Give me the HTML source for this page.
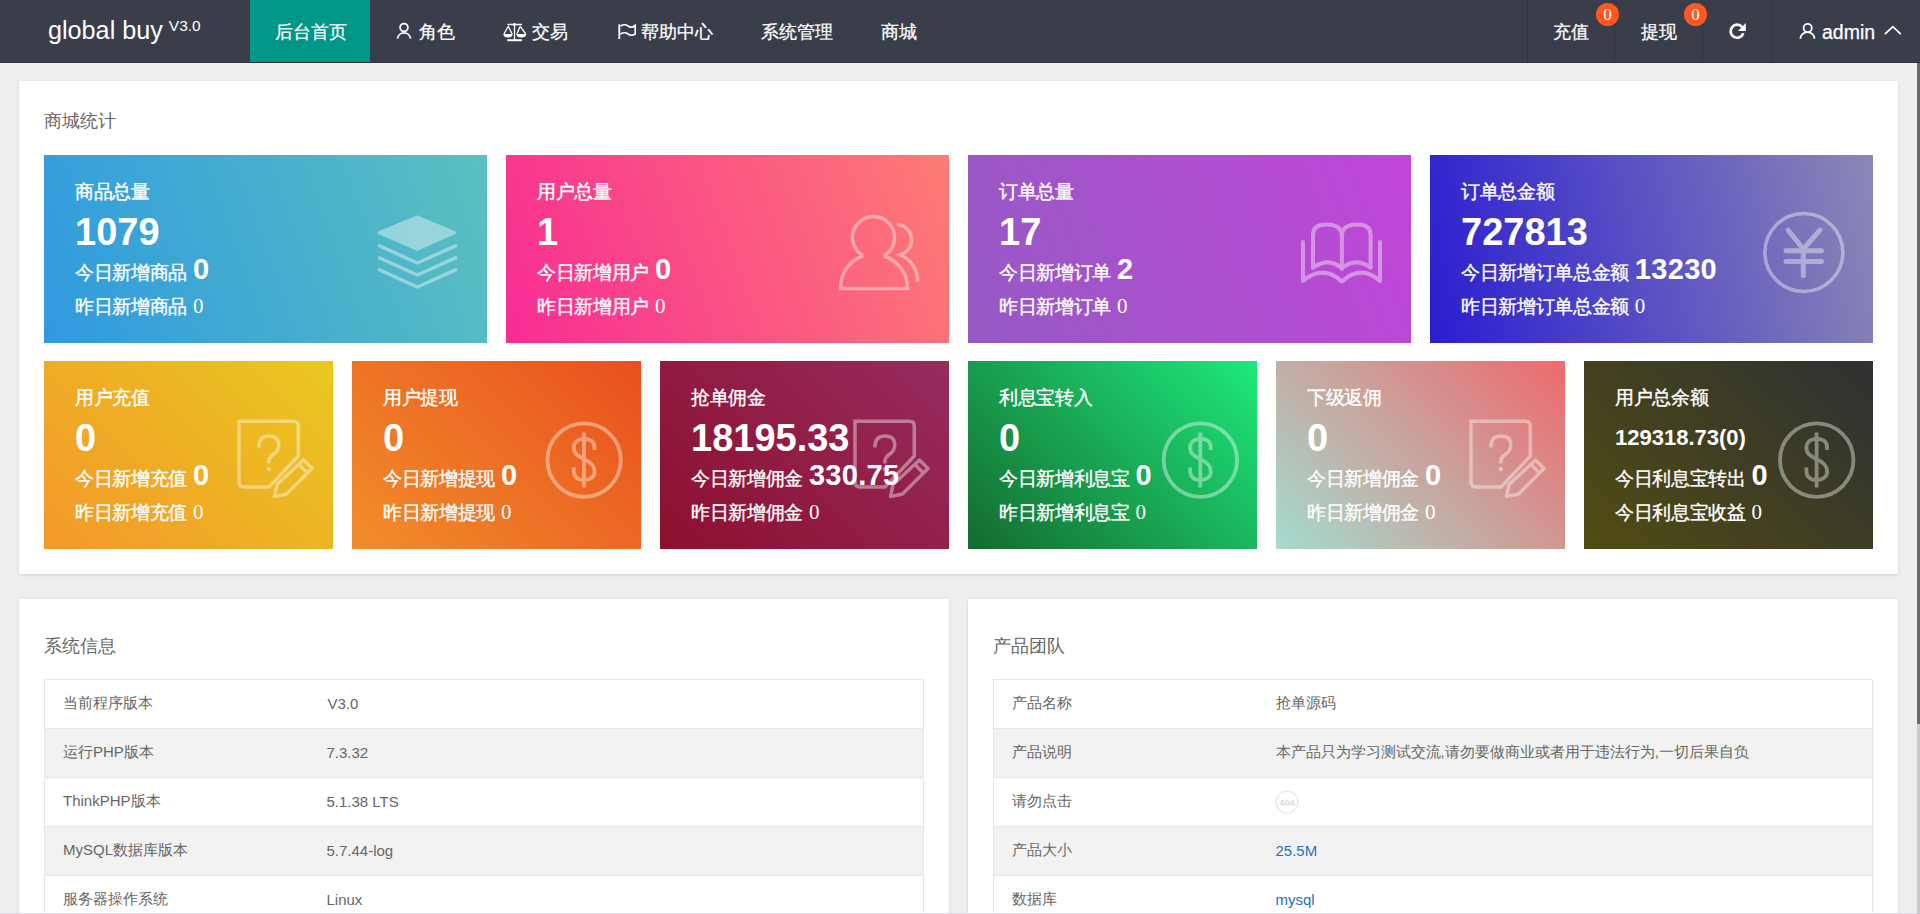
<!DOCTYPE html>
<html><head><meta charset="utf-8">
<style>
*{margin:0;padding:0;box-sizing:border-box}
html,body{width:1920px;height:914px;overflow:hidden;background:#eeeeee;font-family:"Liberation Sans",sans-serif}
.abs{position:absolute}
#hdr{position:absolute;left:0;top:0;width:1920px;height:63px;background:#3a3e4a;border-bottom:1px solid #2f323c}
.logo{position:absolute;left:48px;top:16px;color:#fff;font-size:25.2px;white-space:nowrap}
.logo sup{font-size:15.5px;position:relative;top:1px;vertical-align:top;margin-left:6px}
.nav{position:absolute;top:1px;height:62px;line-height:62px;color:#fff;font-size:18px;white-space:nowrap;-webkit-text-stroke:0.25px #fff}
.nav svg{position:absolute}
.sep{position:absolute;top:0;width:1px;height:62px;background:#31343d}
.badge{position:absolute;top:3px;width:23px;height:23px;border-radius:50%;background:#FF5722;color:#fff;font-family:"Liberation Serif",serif;font-size:17px;line-height:23px;text-align:center}
.card{position:absolute;background:#fff;box-shadow:0 1px 3px rgba(0,0,0,.12)}
.ctitle{position:absolute;color:#666;font-size:18px;white-space:nowrap}
.st{position:absolute;color:#fff;overflow:hidden;white-space:nowrap;-webkit-text-stroke:0.35px #fff}
.st .n{-webkit-text-stroke:0}
.st .t{position:absolute;left:31px;top:27px;font-size:19px;line-height:20px;letter-spacing:-0.35px}
.st .n{position:absolute;left:31px;top:57px;font-size:38px;line-height:40px;font-weight:bold}
.st .d1{position:absolute;left:31px;top:104px;font-size:19px;line-height:20px;letter-spacing:-0.35px}
.st .d1 b{font-size:29px;margin-left:6px;-webkit-text-stroke:0;letter-spacing:0.3px}
.st .d2{position:absolute;left:31px;top:141px;font-size:19px;line-height:20px;letter-spacing:-0.35px}
.st .d2 i{font-style:normal;font-family:"Liberation Serif",serif;font-size:21px;margin-left:6px;-webkit-text-stroke:0;letter-spacing:0}
.st svg{position:absolute}
table{position:absolute;border-left:1px solid #e6e6e6;border-right:1px solid #e6e6e6;border-collapse:collapse;table-layout:fixed;font-size:15px;color:#666}
td{border-top:1px solid #e6e6e6;border-bottom:1px solid #e6e6e6;height:49px;padding:0 18px 2px 18px;white-space:nowrap}
td.v{padding-left:19px}
tr.g td{background:#f2f2f2}
td a{color:#1E70BF;text-decoration:none}
#sb{position:absolute;left:1917px;top:63px;width:3px;height:851px;background:#c9c9c9}
#sbt{position:absolute;left:1917px;top:63px;width:3px;height:661px;background:#6b6b6b}
</style></head><body>

<div id="hdr">
  <div class="logo">global buy<sup>V3.0</sup></div>
  <div class="abs" style="left:250px;top:0;width:120px;height:62px;background:#009688"></div>
  <div class="nav" style="left:275px">后台首页</div>
  <div class="nav" style="left:419px">角色</div>
  <div class="nav" style="left:532px">交易</div>
  <div class="nav" style="left:641px">帮助中心</div>
  <div class="nav" style="left:761px">系统管理</div>
  <div class="nav" style="left:881px">商城</div>

  <div class="sep" style="left:1527px"></div>
  <div class="sep" style="left:1614px"></div>
  <div class="sep" style="left:1702px"></div>
  <div class="sep" style="left:1772px"></div>
  <div class="nav" style="left:1553px">充值</div>
  <div class="badge" style="left:1596px">0</div>
  <div class="nav" style="left:1641px">提现</div>
  <div class="badge" style="left:1684px">0</div>
  <div class="nav" style="left:1822px;font-size:19.5px">admin</div>
</div>






<div class="card" style="left:19px;top:81px;width:1879px;height:493px"></div>
<div class="ctitle" style="left:44px;top:109px">商城统计</div>

<!-- row 1 -->
<div class="st" style="left:44px;top:155px;width:443px;height:188px;background:linear-gradient(70deg,#2f9ae0,#5bc0bf)">
  <div class="t">商品总量</div><div class="n">1079</div>
  <div class="d1">今日新增商品<b>0</b></div><div class="d2">昨日新增商品<i>0</i></div>
</div>
<div class="st" style="left:506px;top:155px;width:443px;height:188px;background:linear-gradient(70deg,#f72c93,#fd7c74)">
  <div class="t">用户总量</div><div class="n">1</div>
  <div class="d1">今日新增用户<b>0</b></div><div class="d2">昨日新增用户<i>0</i></div>
</div>
<div class="st" style="left:968px;top:155px;width:443px;height:188px;background:linear-gradient(70deg,#955ac4,#c146d8)">
  <div class="t">订单总量</div><div class="n">17</div>
  <div class="d1">今日新增订单<b>2</b></div><div class="d2">昨日新增订单<i>0</i></div>
</div>
<div class="st" style="left:1430px;top:155px;width:443px;height:188px;background:linear-gradient(78deg,#2a1dd0,#8c88b5)">
  <div class="t">订单总金额</div><div class="n">727813</div>
  <div class="d1">今日新增订单总金额<b>13230</b></div><div class="d2">昨日新增订单总金额<i>0</i></div>
</div>

<!-- row 2 -->
<div class="st" style="left:44px;top:361px;width:289px;height:188px;background:linear-gradient(45deg,#f3982a,#e9c81f)">
  <div class="t">用户充值</div><div class="n">0</div>
  <div class="d1">今日新增充值<b>0</b></div><div class="d2">昨日新增充值<i>0</i></div>
</div>
<div class="st" style="left:352px;top:361px;width:289px;height:188px;background:linear-gradient(45deg,#f28d2a,#e8501f)">
  <div class="t">用户提现</div><div class="n">0</div>
  <div class="d1">今日新增提现<b>0</b></div><div class="d2">昨日新增提现<i>0</i></div>
</div>
<div class="st" style="left:660px;top:361px;width:289px;height:188px;background:linear-gradient(45deg,#8c0f2e,#962c5e)">
  <div class="t">抢单佣金</div><div class="n">18195.33</div>
  <div class="d1">今日新增佣金<b>330.75</b></div><div class="d2">昨日新增佣金<i>0</i></div>
</div>
<div class="st" style="left:968px;top:361px;width:289px;height:188px;background:linear-gradient(45deg,#146a2f,#1ee97b)">
  <div class="t">利息宝转入</div><div class="n">0</div>
  <div class="d1">今日新增利息宝<b>0</b></div><div class="d2">昨日新增利息宝<i>0</i></div>
</div>
<div class="st" style="left:1276px;top:361px;width:289px;height:188px;background:linear-gradient(45deg,#a4dcce,#ee6a6c)">
  <div class="t">下级返佣</div><div class="n">0</div>
  <div class="d1">今日新增佣金<b>0</b></div><div class="d2">昨日新增佣金<i>0</i></div>
</div>
<div class="st" style="left:1584px;top:361px;width:289px;height:188px;background:linear-gradient(45deg,#514c12,#2e3133)">
  <div class="t">用户总余额</div><div class="n" style="font-size:22px">129318.73(0)</div>
  <div class="d1">今日利息宝转出<b>0</b></div><div class="d2">今日利息宝收益<i>0</i></div>
</div>

<!-- bottom cards -->
<div class="card" style="left:19px;top:599px;width:930px;height:400px"></div>
<div class="ctitle" style="left:44px;top:634px">系统信息</div>
<table style="left:44px;top:679px;width:880px">
<colgroup><col style="width:264px"><col></colgroup>
<tr><td>当前程序版本</td><td class="v">V3.0</td></tr>
<tr class="g"><td>运行PHP版本</td><td>7.3.32</td></tr>
<tr><td>ThinkPHP版本</td><td>5.1.38 LTS</td></tr>
<tr class="g"><td>MySQL数据库版本</td><td>5.7.44-log</td></tr>
<tr><td>服务器操作系统</td><td>Linux</td></tr>
</table>

<div class="card" style="left:968px;top:599px;width:930px;height:400px"></div>
<div class="ctitle" style="left:993px;top:634px">产品团队</div>
<table style="left:993px;top:679px;width:880px">
<colgroup><col style="width:264px"><col></colgroup>
<tr><td>产品名称</td><td>抢单源码</td></tr>
<tr class="g"><td>产品说明</td><td>本产品只为学习测试交流,请勿要做商业或者用于违法行为,一切后果自负</td></tr>
<tr><td>请勿点击</td><td></td></tr>
<tr class="g"><td>产品大小</td><td><a>25.5M</a></td></tr>
<tr><td>数据库</td><td><a>mysql</a></td></tr>
</table>

<svg id="ov" width="1920" height="914" viewBox="0 0 1920 914" style="position:absolute;left:0;top:0" fill="none" stroke="#fff">
<defs>
 <g id="survey" stroke-width="3.5" stroke-linejoin="round">
  <path d="M269 487 L244 487 Q239 487 239 482 L239 421.3 L293.5 421.3 Q298.3 421.3 298.3 426 L298.3 456 Z" stroke-linejoin="miter"/>
  <path d="M258.8 447.5 Q258.8 436 269 436 Q278.8 436 278.8 445 Q278.8 451 272.5 455 Q268.8 457.5 268.8 462 L268.8 463.5"/>
  <circle cx="268.8" cy="469" r="2.3" fill="#fff" stroke="none"/>
  <path d="M303.5 460 L312 468.5 L286.5 494 L274.5 496.5 L277 484.5 Z"/>
  <path d="M299 464.5 L307.5 473"/>
 </g>
 <g id="dollar" stroke-width="3.8">
  <circle cx="584.1" cy="460.1" r="36.7"/>
  <path d="M584 432.5 L584 487.5"/>
  <path d="M594.4 450 L594.4 447 C594.4 441.5 590 438.8 584 438.8 C577.5 438.8 573.8 442.5 573.8 448 C573.8 454 579 456.8 584 459.3 C590 461.8 594.6 465.5 594.6 471.5 C594.6 477 590 480 584 480 C577.8 480 573.8 477 573.8 471 L573.8 467.5"/>
 </g>
</defs>
<g opacity="0.4">
 <!-- layers -->
 <path d="M417.3 217 L454.5 232.7 L417.3 249.5 L379 232.7 Z" fill="#fff" stroke-width="3" stroke-linejoin="round"/>
 <path d="M379.5 245.8 L417.3 263 L455.5 245.8 M379.5 257.9 L417.3 275 L455.5 257.9 M379.5 269.9 L417.3 287 L455.5 269.9" stroke-width="3.5" stroke-linecap="round" stroke-linejoin="round"/>
 <!-- users -->
 <g stroke-width="3.4" stroke-linejoin="miter">
  <path d="M863.2 255.8 A21 21 0 1 1 883.9 255.8"/>
  <path d="M863.2 255.8 C849 261 840.5 273 840.5 288.5 L907.5 288.5 C907.5 273 898 261 883.9 255.8"/>
  <path d="M898.5 224.5 A15.5 15.5 0 0 1 900 254.8 C911 259.5 917.5 269 917.5 280.5" stroke-linecap="round"/>
 </g>
 <!-- book -->
 <g stroke-width="4" stroke-linecap="round" stroke-linejoin="round">
  <path d="M1303 242 L1303 281 Q1323 264 1341.9 281.5 Q1361 264 1380 281 L1380 242"/>
  <path d="M1313 267.5 L1313 235 Q1313 224.6 1326 224.6 Q1341.9 224.6 1341.9 236 L1341.9 269"/>
  <path d="M1370.6 267.5 L1370.6 235 Q1370.6 224.6 1357.6 224.6 Q1341.9 224.6 1341.9 236"/>
  <path d="M1313 267.5 Q1328 257 1341.9 268 Q1356 257 1370.6 267.5"/>
 </g>
 <!-- yen -->
 <circle cx="1803.85" cy="252.5" r="39" stroke-width="3.5"/>
 <path d="M1788.2 230.2 L1803.3 249 L1820 230.2 M1803.3 249 L1803.3 275.5 M1786 250.8 L1821.5 250.8 M1786 261.4 L1821.5 261.4" stroke-width="5" stroke-linecap="round" stroke-linejoin="round"/>
 <!-- row2 icons -->
 <use href="#survey"/>
 <use href="#survey" transform="translate(616 0)"/>
 <use href="#survey" transform="translate(1232 0)"/>
 <use href="#dollar"/>
 <use href="#dollar" transform="translate(616.3 0)"/>
 <use href="#dollar" transform="translate(1232.6 0)"/>
</g>
<circle cx="1287" cy="802.2" r="11" stroke="#e3e3e3" stroke-width="1.1"/>
<text x="1287" y="805.5" fill="#dcdcdc" stroke="none" font-size="9" font-weight="bold" text-anchor="middle" font-family="Liberation Sans">404</text>
<!-- header icons -->
<g stroke-width="1.8">
 <circle cx="404" cy="27.5" r="3.9"/>
 <path d="M397.5 38.7 A6.6 6.6 0 0 1 410.6 38.7"/>
 <circle cx="1807.7" cy="28" r="4.1"/>
 <path d="M1800.4 38.7 A7 6.5 0 0 1 1814.5 38.7"/>
 <path d="M1884.8 34.2 L1892.9 26.7 L1900.7 34.2"/>
 <path d="M507.4 24.5 L522 24.5 M514.5 24.5 L514.5 40.2 M508.3 26.3 L503.9 34 M508.3 26.3 L512.1 34 M520.2 26.3 L516.9 34 M520.2 26.3 L525.8 34" stroke-width="1.3"/>
 <path d="M507.4 40.2 L522 40.2" stroke-width="2"/>
 <circle cx="514.5" cy="24.5" r="1.5" fill="#fff" stroke="none"/>
 <path d="M503.4 34 L512.6 34 Q512.6 37.5 508 37.5 Q503.4 37.5 503.4 34 Z M516.4 34 L526.3 34 Q526.3 37.5 521.35 37.5 Q516.4 37.5 516.4 34 Z" fill="#fff" stroke="none"/>
 <path d="M619.3 24.3 L619.3 39"/>
 <path d="M620.5 26 Q625 23.5 628 26 Q631.5 28.5 635.2 25.5 L635.2 34 Q631.5 36.5 628 34 Q625 31.5 620.5 34" stroke-width="1.7"/>
 <path d="M1742.1 27 A6.5 6.5 0 1 0 1743.3 33.3" stroke-width="2.7"/>
 <path d="M1745.8 23.1 L1745.8 30.9 L1737.9 30.9 Z" fill="#fff" stroke="none"/>
</g>
</svg>
<div class="abs" style="left:0;top:913px;width:1920px;height:1px;background:#dcdde0"></div>
<div id="sb"></div><div id="sbt"></div>
</body></html>
